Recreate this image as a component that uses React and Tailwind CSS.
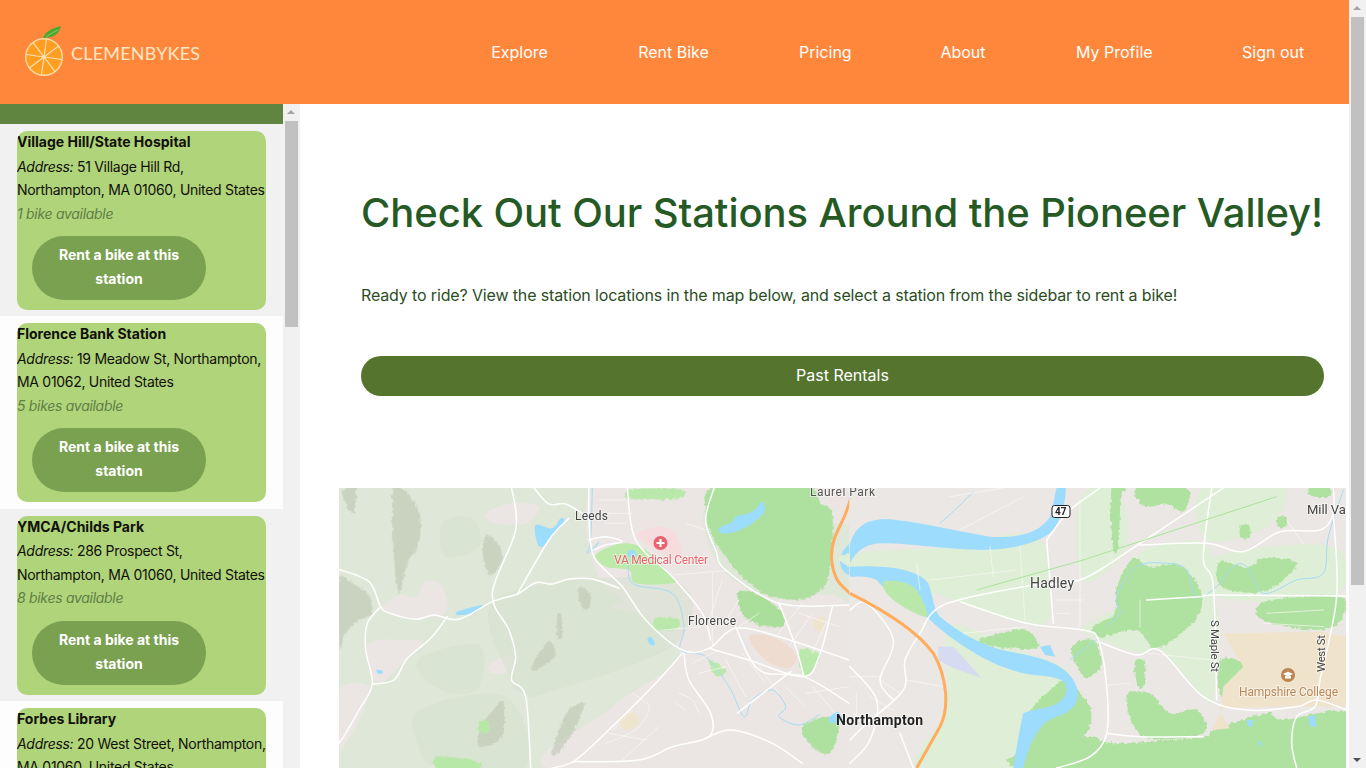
const FONT = "font-['Inter','Liberation_Sans',sans-serif]";

const stations = [
  { name: 'Village Hill/State Hospital', l1: '51 Village Hill Rd,', l2: 'Northampton, MA 01060, United States', bikes: '1 bike available', bg: 'bg-[#f1f1f1]' },
  { name: 'Florence Bank Station', l1: '19 Meadow St, Northampton,', l2: 'MA 01062, United States', bikes: '5 bikes available', bg: 'bg-[#fdfdfd]' },
  { name: 'YMCA/Childs Park', l1: '286 Prospect St,', l2: 'Northampton, MA 01060, United States', bikes: '8 bikes available', bg: 'bg-[#f1f1f1]' },
  { name: 'Forbes Library', l1: '20 West Street, Northampton,', l2: 'MA 01060, United States', bikes: '3 bikes available', bg: 'bg-[#fdfdfd]' },
];

const navItems = [
  { label: 'Explore', w: 'w-[57px]' },
  { label: 'Rent Bike', w: 'w-[71px]' },
  { label: 'Pricing', w: 'w-[51px]' },
  { label: 'About', w: 'w-[46px]' },
  { label: 'My Profile', w: 'w-[76px]' },
  { label: 'Sign out', w: 'w-[62px]' },
];

// turns "x,y x,y ..." into a catmull-rom curve, so traced map lines don't look like polylines
function spline(str, closed = false) {
  const p = str.trim().split(/\s+/).map((s) => s.split(',').map(Number));
  const at = (i) => (closed ? p[(i + p.length) % p.length] : p[Math.max(0, Math.min(p.length - 1, i))]);
  let d = `M${p[0][0]} ${p[0][1]}`;
  const n = closed ? p.length : p.length - 1;
  for (let i = 0; i < n; i++) {
    const [a, b, c, e] = [at(i - 1), at(i), at(i + 1), at(i + 2)];
    d += `C${b[0] + (c[0] - a[0]) / 6} ${b[1] + (c[1] - a[1]) / 6} ${c[0] - (e[0] - b[0]) / 6} ${c[1] - (e[1] - b[1]) / 6} ${c[0]} ${c[1]}`;
  }
  return closed ? d + 'Z' : d;
}

const Area = ({ pts, fill, opacity }) => <path d={spline(pts, true)} fill={fill} opacity={opacity} />;
const Line = ({ pts, w = 5, color = '#fff' }) => (
  <path d={spline(pts)} fill="none" stroke={color} strokeWidth={w} strokeLinecap="round" strokeLinejoin="round" />
);

const westPink = [
  '770,20 1110,20 1090,120 1150,270 1300,350 1540,390 1540,870 640,870 820,680 1020,530 900,400 770,270',
  '440,100 520,70 600,80 560,130 470,130',
  '130,380 180,345 230,350 260,305 310,320 320,395 230,415 140,400',
  '90,490 200,480 250,490 190,550 130,605 95,580',
  '0,630 90,620 60,720 20,790 0,800',
  '820,380 890,355 900,395 850,392',
  '450,555 515,525 515,575 460,580',
  '1420,20 1540,20 1540,120 1490,130 1450,80',
];
const westPale = [
  '480,350 1000,300 1010,490 620,640 560,640 510,590',
  '250,530 420,495 420,620 340,640 250,590',
  '240,690 500,650 560,860 300,860 240,800',
  '310,130 400,115 420,200 320,230',
];
const westShade = [
  '160,24 190,24 240,95 240,190 205,250 180,340 165,230',
  '10,30 50,24 45,100 20,70',
  '0,300 40,310 85,340 100,400 60,420 20,460 0,500',
  '440,165 475,190 490,240 455,285 432,230',
  '722,320 755,345 745,388 722,370',
  '580,555 630,485 648,530 590,568',
  '690,690 735,672 700,760 640,830 660,750',
  '462,690 492,665 488,770 420,800 425,745',
  '655,405 668,410 668,470 655,472',
];
const westRoads = [
  '518,24 530,150 460,340 510,450 530,530 518,600 560,650 575,864',
  '0,268 90,305 125,380 155,400 230,418 285,405 360,418 460,365 535,342 590,308 640,312 690,297 760,297 840,325',
  '125,380 85,430 80,510 100,612 60,690 20,760 0,790',
  '100,612 165,600 205,535 275,475 325,410',
  '535,342 630,180 690,115',
  '585,24 630,72 680,72 745,110',
  '750,24 750,110 765,230 850,320 920,420 1030,510 1110,505 1190,445 1320,470 1530,540',
  '865,24 890,180 1000,290 1090,400 1115,480',
  '1125,24 1100,120 1130,210 1160,270 1320,370 1530,375',
  '1190,440 1260,570 1395,590 1530,670',
  '1110,505 1230,540 1390,590 1440,530 1480,380',
  '1030,520 950,610 830,730 710,840 640,864',
  '1035,520 1050,600 1115,700 1110,770 1000,800 900,840 700,845',
  '1110,770 1180,750 1300,790 1390,850',
  '1195,700 1220,680 1355,575',
  '765,210 800,195 850,185 800,170 750,180',
  '1320,370 1370,500 1395,590',
];
const westMinor = [
  '1120,280 1120,500', '1005,285 1160,272', '975,450 1085,440', '1390,370 1310,470',
  '1150,300 1110,420', '1200,360 1150,440', '1260,400 1200,440', '1420,400 1350,500', '1460,430 1420,520',
  '1160,540 1220,650', '1210,520 1280,610', '1260,560 1320,640', '1340,620 1400,680', '1420,620 1490,700',
  '880,640 930,680 900,740 850,770 800,790', '810,760 920,780', '880,690 820,750', '960,740 850,840',
  '1020,640 1060,660 1080,700', '1010,670 1040,690',
  '780,60 860,60', '790,100 880,100', '800,130 860,130',
  '1040,130 1100,150', '1380,400 1500,440', '1400,640 1530,620', '1060,550 1140,510', '1080,580 1160,560',
];
const eastPale = [
  '0,220 300,200 560,170 600,400 520,430 250,340 0,260',
  '300,440 500,510 660,590 520,760 480,864 200,864 290,680',
  '690,60 800,24 830,200 700,300',
  '870,220 1060,190 1090,340 880,360',
  '880,360 1090,350 1090,650 1050,640 930,510 880,520 750,480 700,440',
  '1060,24 1300,24 1250,140 1070,180',
  '1100,230 1450,200 1450,350 1100,350',
];
const eastGreen = [
  '785,24 825,24 812,60 805,205 788,195',
  '860,24 1010,24 1000,95 950,70 885,80',
  '850,235 900,260 990,255 1050,330 1050,395 1005,450 915,505 860,450 750,470 730,440 795,400 800,320',
  '1110,245 1190,262 1240,235 1320,240 1335,265 1240,335 1115,320',
  '1172,138 1198,138 1198,172 1172,172',
  '1282,112 1308,112 1308,138 1282,138',
  '1382,24 1438,24 1438,48 1382,48',
  '1112,540 1215,565 1235,635 1175,670 1115,655',
  '1245,625 1290,595 1355,620 1345,665 1270,665',
  '380,485 470,455 530,450 565,500 480,505',
  '505,790 530,705 640,600 690,640 725,700 700,770 620,800 560,864 500,864',
  '530,864 590,790 720,770 800,790 1060,770 1090,750 1250,700 1300,720 1490,700 1490,870',
  '665,505 730,480 755,555 705,590',
  '855,545 885,545 880,620 862,612',
  '1245,365 1475,352 1440,445 1245,425',
  '830,650 900,640 960,700 1040,690 1060,760 880,770',
];
const eastRoads = [
  '210,460 280,375 520,320 690,300 870,190 1120,24',
  '330,365 530,430 700,450 745,480 770,620 770,760 720,830 620,864',
  '745,485 860,525 930,512 1060,650 1190,690 1340,680 1400,660 1490,690',
  '590,180 610,430',
  '590,180 660,90 750,24',
  '870,195 1070,190 1180,215 1290,155 1410,150 1450,100 1450,24',
  '1085,24 1060,235 1090,320 1100,660',
  '1450,100 1460,350 1410,600 1395,680 1340,710 1325,790 1340,864',
  '890,360 1050,350 1100,345 1490,348',
  '210,460 165,540 160,630 50,730 0,780',
  '0,390 50,370 130,480 90,600 130,660',
  '150,760 190,864',
  '770,760 870,770 1060,770',
  '0,560 80,660 60,780 0,850',
];
const eastMinor = [
  '200,250 210,330', '420,200 430,290', '510,200 525,420', '690,60 690,440', '620,360 700,360', '620,400 660,400',
  '240,300 500,270', '340,460 530,440', '0,590 90,590', '20,640 20,720', '90,600 150,640', '60,650 130,690',
  '170,600 280,620', '10,700 60,740', '775,615 840,610', '890,520 1090,540', '1250,400 1420,390', '1240,430 1420,440',
  '1310,120 1360,190', '870,360 870,440', '300,50 460,24', '330,150 520,50',
];

function Logo() {
  return (
    <svg width="42" height="52" viewBox="0 0 42 52" className="shrink-0">
      <path d="M19 13 C22 5 30 3 37 1 C35 9 30 13 19 13Z" fill="#4ba72f" />
      <path d="M22 12 C26 9 30 7 34 5" stroke="#a5d98c" strokeWidth="0.7" fill="none" />
      <circle cx="20" cy="32" r="18.3" fill="#ff9e20" stroke="#ffdca6" strokeWidth="1.4" />
      <g stroke="#ffe3b5" strokeWidth="1.1">
        <path d="M20 14V50M2 32H38" transform="rotate(8 20 32)" />
        <path d="M7 19L33 45M33 19L7 45" transform="rotate(8 20 32)" />
      </g>
      <circle cx="20" cy="32" r="1.8" fill="#ffe3b5" />
    </svg>
  );
}

function ScrollBar({ thumbHeight, bottomArrow = true }) {
  return (
    <div className="relative w-[17px] shrink-0 bg-[#f1f1f1]">
      <div className="absolute left-[4px] top-[6px] h-0 w-0 border-x-[4px] border-b-[4px] border-x-transparent border-b-[#a3a3a3]" />
      <div className="absolute left-[2px] top-[17px] w-[13px] bg-[#c1c1c1]" style={{ height: thumbHeight }} />
      {bottomArrow && (
        <div className="absolute bottom-[6px] left-[4px] h-0 w-0 border-x-[4px] border-t-[4px] border-x-transparent border-t-[#505050]" />
      )}
    </div>
  );
}

function StationCard({ s }) {
  return (
    <div className={`${s.bg} h-[192.4px] px-[17px] pt-[7px]`}>
      <div className="h-[179px] w-[249px] overflow-hidden rounded-[10px] bg-[#b0d47a] text-[14px] leading-[23.5px] tracking-[-0.3px] text-[#10100c]">
        <div className="-mt-px whitespace-nowrap font-bold tracking-normal">{s.name}</div>
        <div className="mt-px whitespace-nowrap"><em>Address:</em> {s.l1}</div>
        <div className="whitespace-nowrap">{s.l2}</div>
        <div className="whitespace-nowrap italic text-[#5f7f45]">{s.bikes}</div>
        <button className="ml-[15px] mt-[11px] h-[64px] w-[174px] rounded-full bg-[#79a14f] px-4 pb-[2px] text-center text-[14px] font-bold leading-[24px] tracking-normal text-white">
          Rent a bike at this station
        </button>
      </div>
    </div>
  );
}

function MapView() {
  return (
    <svg viewBox="339 488 1007 280" className="block h-[280px] w-[1007px]">
      <defs>
        <filter id="soft" x="0" y="0" width="100%" height="100%">
          <feGaussianBlur stdDeviation="0.45" />
        </filter>
        <filter id="rough" x="-5%" y="-5%" width="110%" height="110%">
          <feTurbulence type="fractalNoise" baseFrequency="0.09" numOctaves="3" seed="4" />
          <feDisplacementMap in="SourceGraphic" scale="14" xChannelSelector="R" yChannelSelector="G" />
        </filter>
        <clipPath id="west"><rect x="0" y="24" width="1531" height="840" /></clipPath>
      </defs>
      <rect x="339" y="488" width="1007" height="280" fill="#ebe7e4" />

      <g filter="url(#soft)">
        {/* west half, traced at 3x */}
        <g transform="translate(339 480) scale(0.33333)" clipPath="url(#west)">
          <rect x="0" y="24" width="1531" height="840" fill="#dfe7d8" />
          {westPink.map((p) => <Area key={p} pts={p} fill="#ebe6e3" />)}
          {westPale.map((p) => <Area key={p} pts={p} fill="#d6e1cd" opacity="0.5" />)}
          <g filter="url(#rough)">
            {westShade.map((p) => <Area key={p} pts={p} fill="#bcc7b1" opacity="0.6" />)}
            <Area pts="1130,20 1400,20 1445,70 1480,105 1470,280 1440,335 1380,358 1290,348 1210,290 1160,230 1120,170 1100,100" fill="#aee0a0" />
            <Area pts="880,28 1025,28 1015,55 872,55" fill="#b9e8aa" />
            <Area pts="420,725 450,725 450,755 420,755" fill="#b7e8a8" />
            <Area pts="295,830 415,845 415,870 300,870" fill="#b7e8a8" />
            <Area pts="950,415 1015,415 1015,445 950,445" fill="#b9e8aa" />
            <Area pts="1200,335 1270,350 1330,400 1330,440 1260,435 1210,400" fill="#a9de9b" />
            <Area pts="1380,510 1440,520 1430,560 1395,590" fill="#bbe8ab" />
            <Area pts="1390,740 1470,710 1500,750 1470,820 1420,800" fill="#aee0a0" />
            <Area pts="1110,540 1160,570 1130,590" fill="#bbe8ab" />
          </g>
          <Area pts="1230,470 1300,470 1370,520 1350,565 1280,540" fill="#efdcd0" />
          <Area pts="1425,420 1458,412 1450,450 1430,450" fill="#efe4cc" />
          <Area pts="840,720 880,695 900,730 860,750" fill="#efe4cc" />
          <Area pts="895,165 960,140 1010,160 1030,220 1025,240 960,215" fill="#f6dcdc" />
          <Area pts="770,225 850,190 920,210 1000,290 1000,310 890,310 870,270 800,260" fill="#bde9ab" />
          <g fill="#9cdcfd">
            <Area pts="1140,145 1180,125 1190,110 1240,95 1270,65 1275,95 1240,130 1190,155 1150,160" fill="#9cdcfd" />
            <Area pts="590,135 640,145 665,115 675,125 640,170 610,200 595,190" fill="#9cdcfd" />
            <Area pts="355,395 430,375 405,400 360,405" fill="#9cdcfd" />
            <Area pts="925,480 935,470 948,490 938,497" fill="#9cdcfd" />
            <Area pts="112,570 130,572 128,582 116,580" fill="#9cdcfd" />
            <Area pts="866,215 885,210 892,230 870,230" fill="#9cdcfd" />
            <Area pts="1470,715 1495,695 1510,720 1480,730" fill="#9cdcfd" />
            <path d="M1535 188C1495 220 1490 270 1535 288Z" />
          </g>
          <Line pts="760,24 755,180 745,220 780,185 760,215" w={3} color="#a5daf5" />
          <Line pts="870,230 880,310 1000,340 1035,440 1025,510 1100,530 1170,620 1215,710 1240,660 1300,630 1340,680 1320,710 1380,735 1440,705" w={3} color="#a5daf5" />
          {westMinor.map((p) => <Line key={p} pts={p} w={2} color="#fbf9f8" />)}
          {westRoads.map((p) => <Line key={p} pts={p} w={4.5} />)}
          <Line pts="1545,24 1520,100 1485,180 1478,240 1495,300 1535,342" w={9} color="#ffac5c" />
        </g>

        {/* east half */}
        <g transform="translate(850 480) scale(0.33333)">
          <rect x="0" y="24" width="1490" height="840" fill="#ebe7e4" />
          <g filter="url(#rough)">
            {eastPale.map((p) => <Area key={p} pts={p} fill="#dfeed6" />)}
            {eastGreen.map((p) => <Area key={p} pts={p} fill="#afe2a1" />)}
          </g>
          <path d="M1120 460L1410 455L1490 470V680L1300 680L1120 685L1085 750L1140 745L1110 700L1120 620L1180 560Z" fill="#f0e3cc" />
          <g fill="#9edcfd">
            <path d="M0 190C20 130 60 115 120 118C200 125 300 150 420 170C500 175 570 160 600 110C610 80 615 40 620 24H648C645 80 630 130 600 160C560 190 480 210 400 210C300 210 180 190 100 190C50 190 20 210 0 250Z" />
            <path d="M0 260C80 255 200 260 235 310C250 350 250 390 270 410C330 460 400 500 480 515C570 530 640 550 670 600C700 650 680 690 620 710C570 725 540 780 520 864H490C500 800 510 740 520 700C560 680 640 690 650 630C650 590 600 590 550 585C450 570 370 520 300 470C260 440 240 420 210 390C150 350 110 340 80 300C50 285 20 290 0 290Z" />
            <path d="M570 500L600 495L615 530L585 525Z" />
            <path d="M1190 720L1210 720L1205 740L1195 740Z" />
            <path d="M1375 710L1395 705L1400 740L1380 740Z" />
            <path d="M1225 785L1235 785L1232 805Z" />
          </g>
          <Area pts="100,305 190,320 230,410 130,360" fill="#b9e8aa" />
          <path d="M265 500L310 500L395 595L300 560L265 540Z" fill="#d5dcf2" />
          <Line pts="770,440 810,400 800,350 860,260 950,250 1010,270 1040,350 1100,320 1150,260 1190,260 1240,340 1340,300 1420,280 1435,170 1480,30" w={3} color="#a5daf5" />
          <Line pts="660,540 740,480" w={3} color="#a5daf5" />
          <Line pts="270,130 320,85 370,35" w={3} color="#a5daf5" />
          {eastMinor.map((p) => <Line key={p} pts={p} w={2} color="#fbf9f8" />)}
          {eastRoads.map((p) => <Line key={p} pts={p} w={4.5} />)}
          <path d="M380 330L700 240L1280 50" fill="none" stroke="#a9e39a" strokeWidth="3" />
          <path d="M0 340C100 390 200 450 250 520C290 590 300 680 270 740L200 864" fill="none" stroke="#ffac5c" strokeWidth="9" />
        </g>
      </g>

      {/* hospital + college markers */}
      <circle cx="660.5" cy="543" r="7" fill="#e8636d" />
      <path d="M660.5 539V547M656.5 543H664.5" stroke="#fff" strokeWidth="2.2" />
      <circle cx="1288" cy="675" r="7" fill="#bc8450" />
      <path d="M1283 674L1288 671.5L1293 674L1288 676.5Z M1285 676V678.5H1291V676" fill="#fff" />
      <rect x="1052" y="505.5" width="18" height="12" rx="2.5" fill="#fff" stroke="#222" strokeWidth="1" />

      <g className="font-['Roboto',sans-serif]" style={{ paintOrder: 'stroke' }} stroke="#ffffff" strokeOpacity="0.5" strokeWidth="2">
        <text x="810" y="496" fontSize="12" fill="#555" textLength="65">Laurel Park</text>
        <text x="575" y="520" fontSize="12" fill="#444" textLength="33">Leeds</text>
        <text x="614" y="564" fontSize="12" fill="#e8636d" textLength="94">VA Medical Center</text>
        <text x="688" y="625" fontSize="12" fill="#444" textLength="48">Florence</text>
        <text x="836" y="725" fontSize="14" fontWeight="700" fill="#222" textLength="87">Northampton</text>
        <text x="1030" y="588" fontSize="14" fill="#444" textLength="44">Hadley</text>
        <text x="1307" y="514" fontSize="13" fill="#444" textLength="58">Mill Valley</text>
        <text x="1239" y="696" fontSize="12" fill="#b9875a" textLength="99">Hampshire College</text>
        <text x="1055" y="515" fontSize="10" fontWeight="700" fill="#222" stroke="none">47</text>
        <text transform="translate(1211 620) rotate(90)" fontSize="11.5" fill="#444" textLength="52">S Maple St</text>
        <text transform="translate(1325 672) rotate(-90)" fontSize="11.5" fill="#444" textLength="37">West St</text>
      </g>
    </svg>
  );
}

export default function App() {
  return (
    <div className={`flex h-screen overflow-hidden bg-white ${FONT}`}>
      <div className="flex min-w-0 flex-1 flex-col">
        <header className="flex h-[104px] shrink-0 items-center justify-between bg-[#ff873b] pl-[24px] pr-[45px]">
          <div className="flex items-center gap-[5px] pb-[2px]">
            <Logo />
            <span className="mt-[4px] font-['Lato',sans-serif] text-[18px] tracking-[0.2px] text-[#ffe6c4]">CLEMENBYKES</span>
          </div>
          <nav className="flex gap-[90px] text-[16px] text-white">
            {navItems.map((item) => (
              <a key={item.label} className={`${item.w} whitespace-nowrap text-center`}>{item.label}</a>
            ))}
          </nav>
        </header>
        <div className="flex min-h-0 flex-1">
          <aside className="flex w-[300px] shrink-0">
            <div className="w-[283px] shrink-0 overflow-hidden">
              <div className="h-[20px] bg-[#5f8540]" />
              {stations.map((s) => (
                <StationCard key={s.name} s={s} />
              ))}
            </div>
            <ScrollBar thumbHeight={206} bottomArrow={false} />
          </aside>
          <main className="min-w-0 flex-1 overflow-hidden">
            <div className="pl-[61px] pr-[25px]">
              <h1 className="whitespace-nowrap pt-[85px] text-[40px] font-medium leading-[48px] tracking-[-0.08px] text-[#255a24]">
                Check Out Our Stations Around the Pioneer Valley!
              </h1>
              <p className="mt-[46px] whitespace-nowrap text-[16px] leading-[24px] tracking-[-0.14px] text-[#2b4d1f]">
                Ready to ride? View the station locations in the map below, and select a station from the sidebar to rent a bike!
              </p>
              <button className="mt-[49px] h-[40px] w-full rounded-full bg-[#55752f] pb-[2px] text-[16px] text-white">Past Rentals</button>
            </div>
            <div className="ml-[39px] mt-[92px]">
              <MapView />
            </div>
          </main>
        </div>
      </div>
      <ScrollBar thumbHeight={568} />
    </div>
  );
}
